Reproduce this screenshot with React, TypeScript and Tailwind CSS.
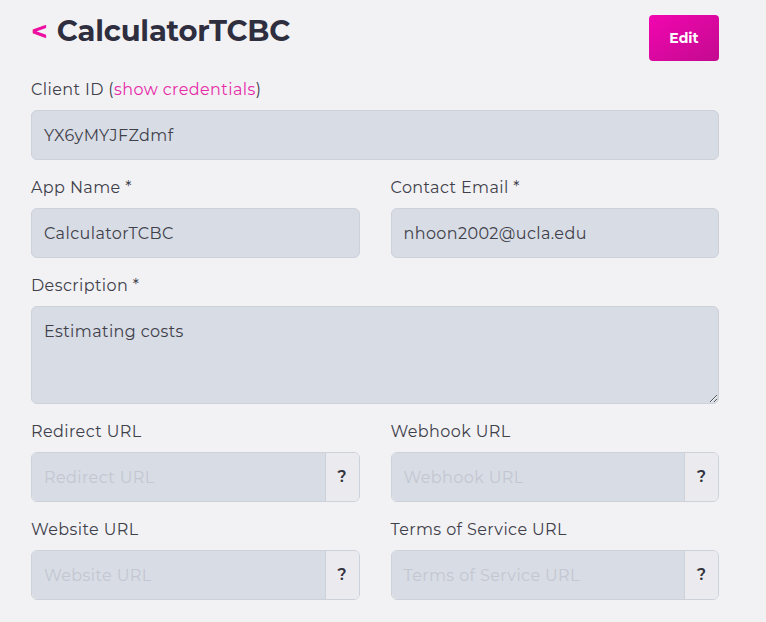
import React from "react";

const font = { fontFamily: "'Montserrat','Open Sans','Noto Sans',sans-serif" };

function Label({ children }: { children: React.ReactNode }) {
  return <div className="text-[16px] leading-[24px] tracking-[0.4px] text-[#40404a] pt-[1px] mb-[8px]">{children}</div>;
}

function TextField({ value }: { value: string }) {
  return (
    <div className="h-[50px] rounded-[6px] bg-[#d8dce5] border border-[#cdd1da] flex items-center px-[12px] pt-[1px] text-[16px] tracking-[0.4px] text-[#40404a]">
      {value}
    </div>
  );
}

function UrlField({ placeholder }: { placeholder: string }) {
  return (
    <div className="h-[50px] rounded-[6px] border border-[#cdd1da] flex overflow-hidden">
      <div className="flex-1 bg-[#d8dce5] flex items-center px-[12px] pt-[1px] text-[16px] tracking-[0.4px] text-[#c3c7d1]">{placeholder}</div>
      <div className="w-[34px] bg-[#ebebef] border-l border-[#cdd1da] flex items-center justify-center text-[16px] font-semibold text-[#33333d]">?</div>
    </div>
  );
}

export default function App() {
  return (
    <div className="w-[766px] h-[622px] bg-[#f2f2f5] overflow-hidden" style={font}>
      <div className="pl-[31px] pr-[47px] pt-[15px]">
        <div className="flex items-start justify-between h-[62px]">
          <div className="flex items-baseline gap-[9px] mt-[-6px]">
            <span className="text-[28px] font-bold text-[#ec0fa0]">&lt;</span>
            <span className="text-[29px] font-bold text-[#2e2e3f] tracking-[-0.2px]">CalculatorTCBC</span>
          </div>
          <button className="w-[70px] h-[46px] rounded-[4px] text-white font-bold text-[14px] bg-gradient-to-br from-[#f205b0] to-[#c30a8f]">
            Edit
          </button>
        </div>
        <div className="mb-[15px]">
          <Label>
            Client ID (<span className="text-[#e62ba7]">show credentials</span>)
          </Label>
          <TextField value="YX6yMYJFZdmf" />
        </div>
        <div className="grid grid-cols-2 gap-x-[31px] gap-y-[15px]">
          <div>
            <Label>App Name *</Label>
            <TextField value="CalculatorTCBC" />
          </div>
          <div>
            <Label>Contact Email *</Label>
            <TextField value="nhoon2002@ucla.edu" />
          </div>
          <div className="col-span-2">
            <Label>Description *</Label>
            <textarea
              readOnly
              defaultValue="Estimating costs"
              className="block w-full h-[98px] rounded-[6px] bg-[#d8dce5] border border-[#cdd1da] px-[12px] pt-[13px] text-[16px] tracking-[0.4px] text-[#40404a] outline-none"
              style={font}
            />
          </div>
          <div>
            <Label>Redirect URL</Label>
            <UrlField placeholder="Redirect URL" />
          </div>
          <div>
            <Label>Webhook URL</Label>
            <UrlField placeholder="Webhook URL" />
          </div>
          <div>
            <Label>Website URL</Label>
            <UrlField placeholder="Website URL" />
          </div>
          <div>
            <Label>Terms of Service URL</Label>
            <UrlField placeholder="Terms of Service URL" />
          </div>
        </div>
      </div>
    </div>
  );
}
